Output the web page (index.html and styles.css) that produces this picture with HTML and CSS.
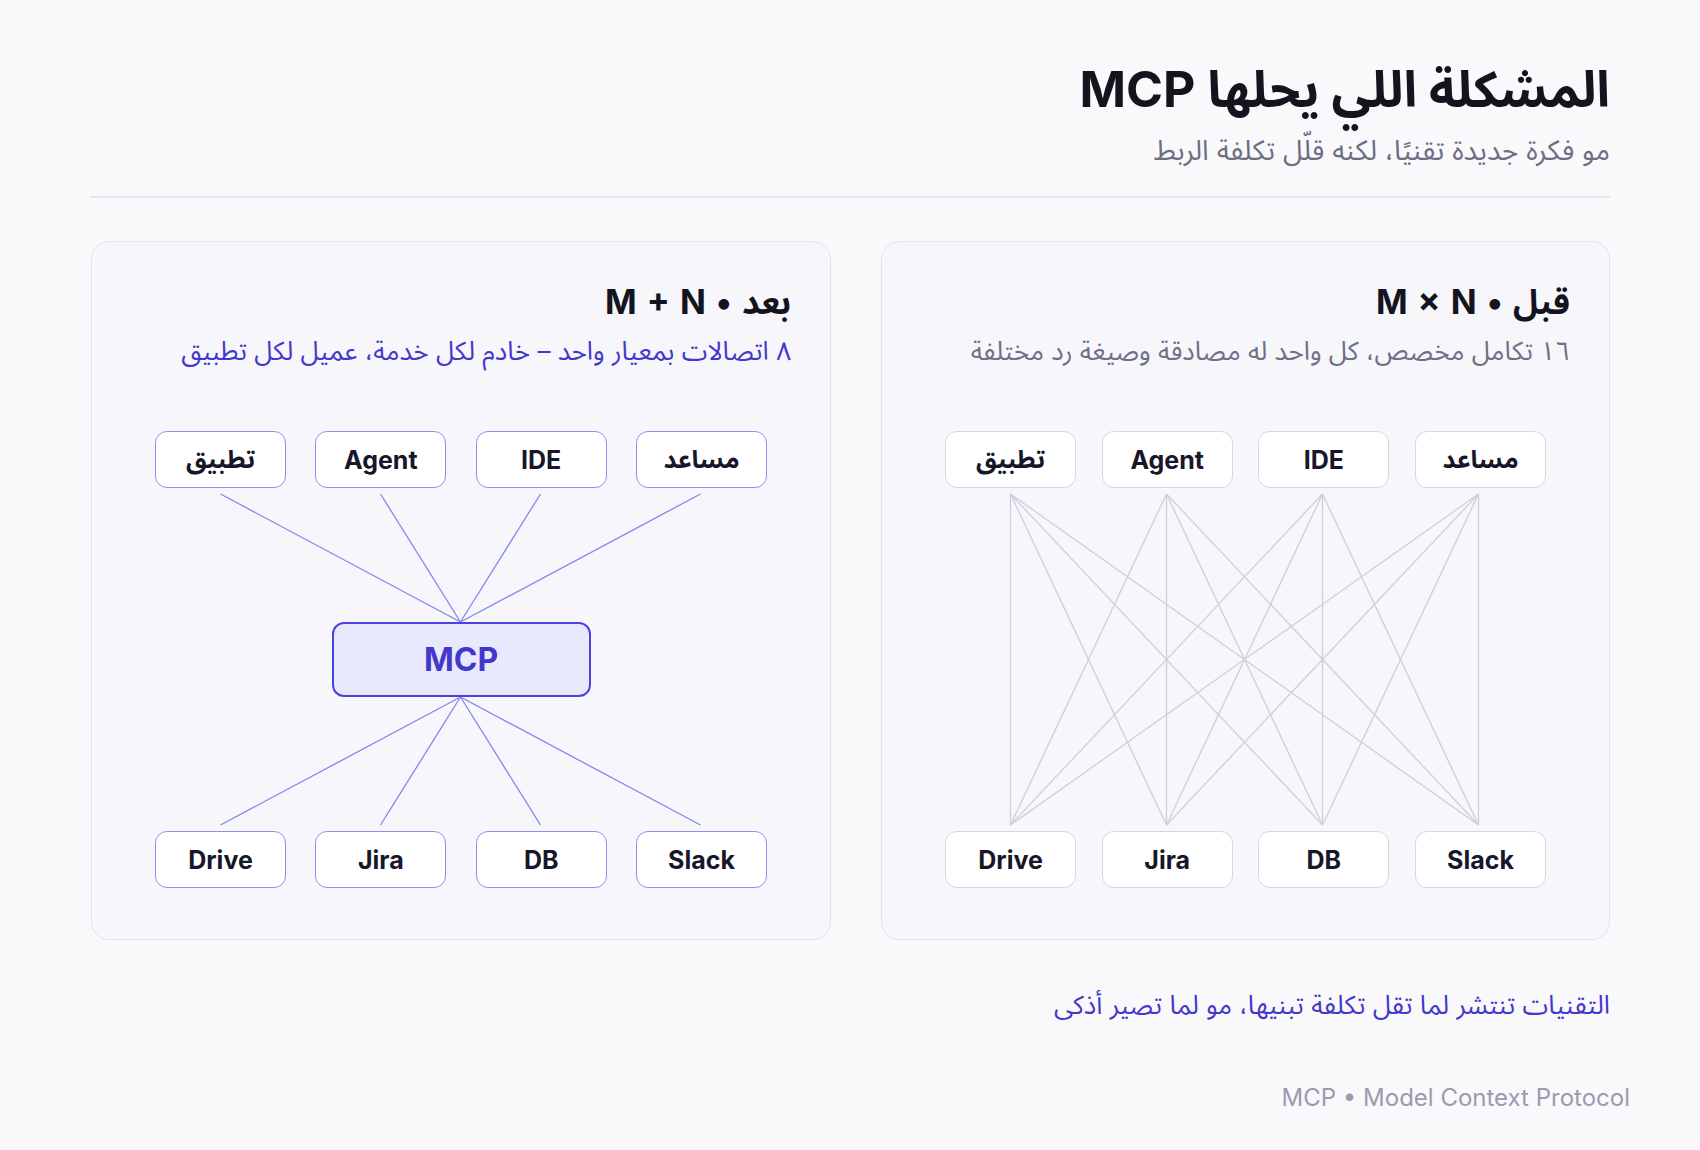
FILE: index.html
```html
<!DOCTYPE html>
<html lang="ar" dir="rtl">
<head>
<meta charset="utf-8">
<title>MCP</title>
<link rel="stylesheet" href="styles.css">
</head>
<body>
<main class="page">
  <header class="head">
    <h1 class="title">المشكلة اللي يحلها MCP</h1>
    <p class="subtitle">مو فكرة جديدة تقنيًا، لكنه قلّل تكلفة الربط</p>
  </header>
  <hr class="divider">

  <section class="cards">
    <article class="card card-before">
      <h2 class="card-title">قبل • M × N</h2>
      <p class="card-sub">١٦ تكامل مخصص، كل واحد له مصادقة وصيغة رد مختلفة</p>
      <div class="diagram diagram-before">
        <svg class="wires" width="599" height="457" viewBox="0 0 599 457" aria-hidden="true">
          <g stroke="#cecede" stroke-width="1.3" fill="none">
            <line x1="65.5" y1="63" x2="65.5" y2="394"/>
            <line x1="65.5" y1="63" x2="221.5" y2="394"/>
            <line x1="65.5" y1="63" x2="377.5" y2="394"/>
            <line x1="65.5" y1="63" x2="533.5" y2="394"/>
            <line x1="221.5" y1="63" x2="65.5" y2="394"/>
            <line x1="221.5" y1="63" x2="221.5" y2="394"/>
            <line x1="221.5" y1="63" x2="377.5" y2="394"/>
            <line x1="221.5" y1="63" x2="533.5" y2="394"/>
            <line x1="377.5" y1="63" x2="65.5" y2="394"/>
            <line x1="377.5" y1="63" x2="221.5" y2="394"/>
            <line x1="377.5" y1="63" x2="377.5" y2="394"/>
            <line x1="377.5" y1="63" x2="533.5" y2="394"/>
            <line x1="533.5" y1="63" x2="65.5" y2="394"/>
            <line x1="533.5" y1="63" x2="221.5" y2="394"/>
            <line x1="533.5" y1="63" x2="377.5" y2="394"/>
            <line x1="533.5" y1="63" x2="533.5" y2="394"/>
          </g>
        </svg>
        <div class="row">
          <div class="node">مساعد</div>
          <div class="node">IDE</div>
          <div class="node">Agent</div>
          <div class="node">تطبيق</div>
        </div>
        <div class="row">
          <div class="node">Slack</div>
          <div class="node">DB</div>
          <div class="node">Jira</div>
          <div class="node">Drive</div>
        </div>
      </div>
    </article>

    <article class="card card-after">
      <h2 class="card-title">بعد • M + N</h2>
      <p class="card-sub card-sub-accent">٨ اتصالات بمعيار واحد – خادم لكل خدمة، عميل لكل تطبيق</p>
      <div class="diagram diagram-after">
        <svg class="wires" width="611" height="457" viewBox="0 0 611 457" aria-hidden="true">
          <g stroke="#8088f1" stroke-width="1.3" fill="none">
            <line x1="65.5" y1="63" x2="305.5" y2="191"/>
            <line x1="225.5" y1="63" x2="305.5" y2="191"/>
            <line x1="385.5" y1="63" x2="305.5" y2="191"/>
            <line x1="545.5" y1="63" x2="305.5" y2="191"/>
            <line x1="305.5" y1="266" x2="65.5" y2="394"/>
            <line x1="305.5" y1="266" x2="225.5" y2="394"/>
            <line x1="305.5" y1="266" x2="385.5" y2="394"/>
            <line x1="305.5" y1="266" x2="545.5" y2="394"/>
          </g>
        </svg>
        <div class="row">
          <div class="node node-accent">مساعد</div>
          <div class="node node-accent">IDE</div>
          <div class="node node-accent">Agent</div>
          <div class="node node-accent">تطبيق</div>
        </div>
        <div class="hub">MCP</div>
        <div class="row">
          <div class="node node-accent">Slack</div>
          <div class="node node-accent">DB</div>
          <div class="node node-accent">Jira</div>
          <div class="node node-accent">Drive</div>
        </div>
      </div>
    </article>
  </section>

  <p class="takeaway">التقنيات تنتشر لما تقل تكلفة تبنيها، مو لما تصير أذكى</p>
  <p class="footer" dir="ltr">MCP • Model Context Protocol</p>
</main>
</body>
</html>
```

FILE: styles.css
```css
* { box-sizing: border-box; }

html, body {
  margin: 0;
  padding: 0;
  background: #f9f9fc;
}

body {
  font-family: Inter, "Noto Sans Arabic", "Noto Sans", "DejaVu Sans", sans-serif;
  color: #15151f;
  width: 1700px;
  height: 1150px;
  overflow: hidden;
}

.page {
  position: relative;
  height: 1150px;
  padding: 57px 90px 0;
}

.head {
  display: flex;
  flex-direction: column;
}

.title {
  margin: 0;
  font-size: 50px;
  line-height: 64px;
  font-weight: 700;
  color: #14141e;
}

.subtitle {
  margin: 11px 0 0;
  font-size: 28px;
  line-height: 36px;
  color: #6d6d83;
}

.divider {
  margin: 28px 0 0;
  border: 0;
  height: 2px;
  background: #e6e6ee;
}

.cards {
  margin-top: 43px;
  display: grid;
  grid-template-columns: 729px 740px;
  column-gap: 50px;
}

.card {
  height: 699px;
  background: #f6f6fb;
  border: 1.5px solid #e3e3ed;
  border-radius: 18px;
  padding: 38px 39px 0;
  display: flex;
  flex-direction: column;
}

.card-title {
  margin: 0;
  font-size: 34px;
  line-height: 44px;
  font-weight: 700;
  color: #14141e;
  word-spacing: 2px;
}

.card-sub {
  margin: 10px 0 0;
  font-size: 26px;
  line-height: 34px;
  color: #6f6f86;
}

.card-sub-accent {
  color: #4338ca;
}

.diagram {
  position: relative;
  margin: 63px 24px 0;
  height: 457px;
  display: flex;
  flex-direction: column;
  justify-content: space-between;
  align-items: center;
}

.wires {
  position: absolute;
  left: 0;
  top: 0;
}

.row {
  position: relative;
  width: 100%;
  display: flex;
  justify-content: space-between;
}

.node {
  width: 131px;
  height: 57px;
  display: flex;
  align-items: center;
  justify-content: center;
  background: #ffffff;
  border: 1.5px solid #d6d6e3;
  border-radius: 12px;
  font-size: 25px;
  font-weight: 700;
  color: #17172a;
}

.node-accent {
  border-color: #8b90f1;
}

.hub {
  position: relative;
  width: 259px;
  height: 75px;
  display: flex;
  align-items: center;
  justify-content: center;
  background: #e8e9fd;
  border: 2.5px solid #4b43e0;
  border-radius: 12px;
  font-size: 32px;
  font-weight: 700;
  color: #4338ca;
}

.takeaway {
  margin: 48px 0 0;
  font-size: 26px;
  line-height: 34px;
  color: #4338ca;
}

.footer {
  position: absolute;
  right: 70px;
  bottom: 37px;
  margin: 0;
  font-size: 24px;
  line-height: 30px;
  color: #9b9bb0;
}
```
